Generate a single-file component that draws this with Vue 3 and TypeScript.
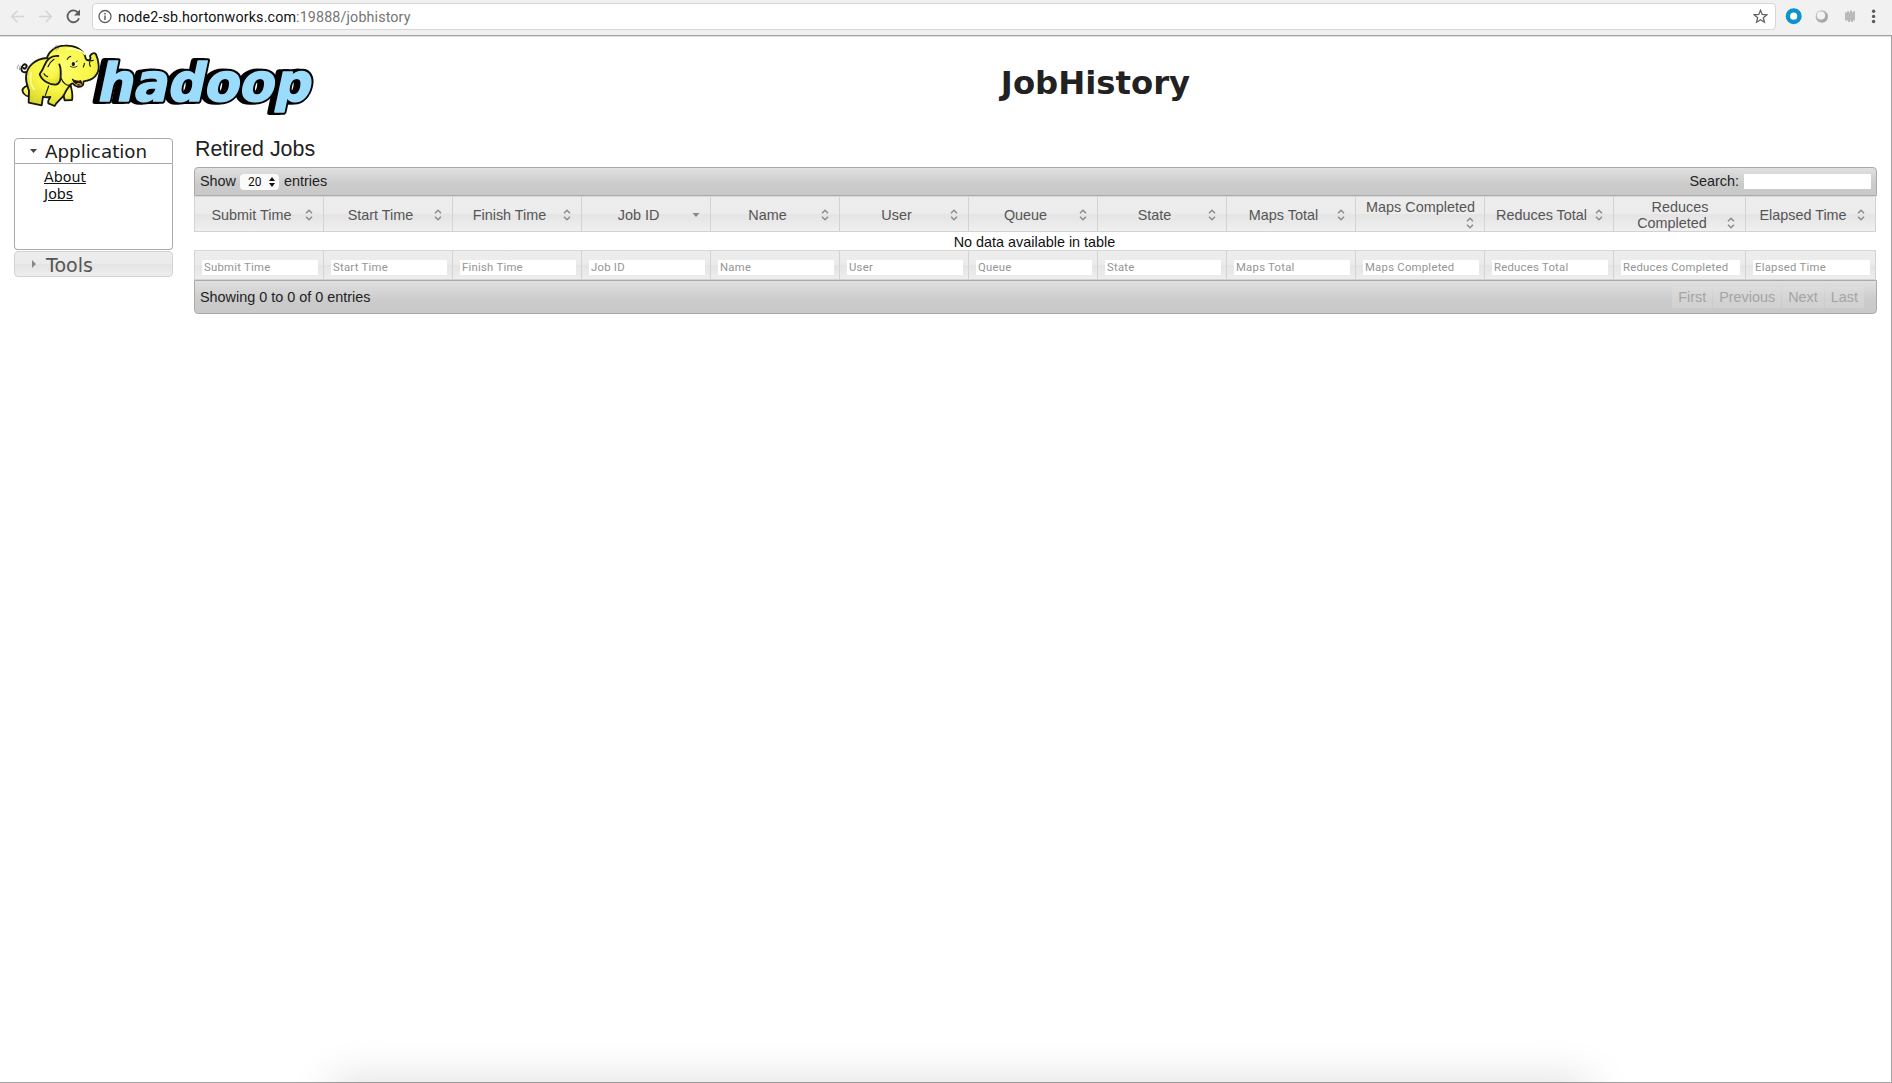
<script setup lang="ts">
interface Column {
  label: string
  sort: 'both' | 'desc'
}

const names: string[] = [
  'Submit Time', 'Start Time', 'Finish Time', 'Job ID', 'Name', 'User', 'Queue',
  'State', 'Maps Total', 'Maps Completed', 'Reduces Total', 'Reduces Completed', 'Elapsed Time',
]
const columns: Column[] = names.map((label) => ({ label, sort: label === 'Job ID' ? 'desc' : 'both' }))
const pages: string[] = ['First', 'Previous', 'Next', 'Last']
</script>

<template>
  <div class="window">
    <header class="browser">
      <svg class="nav" width="92" height="34" viewBox="0 0 92 34" fill="none">
        <path d="M24 16.5H12M17.3 10.8l-5.6 5.7 5.6 5.7M39 16.5h12M45.7 10.8l5.6 5.7-5.6 5.7" stroke="#d4d4d4" stroke-width="1.5" />
        <path d="M78 12.600A5.900 5.900 0 1 0 79 18.200" stroke="#5a5a5a" stroke-width="1.8" />
        <path d="M80 9.600v6h-6z" fill="#5a5a5a" />
      </svg>
      <div class="address">
        <svg width="15" height="15" viewBox="0 0 15 15" fill="none">
          <circle cx="7" cy="7.5" r="6" stroke="#5f5f5f" stroke-width="1.3" />
          <path d="M7 6.600v4.400M7 4v1.500" stroke="#5f5f5f" stroke-width="1.5" />
        </svg>
        <div class="url"><span class="host">node2-sb.hortonworks.com</span>:19888/jobhistory</div>
        <svg class="star" width="15" height="15" viewBox="0 0 15 15" fill="none">
          <path d="M7.5 1.3l1.7 4.2 4.6.3-3.5 2.9 1.1 4.5-3.9-2.5-3.9 2.5 1.1-4.5L1.2 5.8l4.6-.3z" stroke="#5f6368" stroke-width="1.3" />
        </svg>
      </div>
      <svg class="tools" width="116" height="34" viewBox="0 0 116 34" fill="none">
        <defs>
          <linearGradient id="ball" x1="0" y1="0" x2="1" y2="1">
            <stop offset="0" stop-color="#c8c8c8" /><stop offset="1" stop-color="#9b9b9b" />
          </linearGradient>
        </defs>
        <circle cx="17.7" cy="16.200" r="5.8" stroke="#0c92cc" stroke-width="4.4" fill="#fff" />
        <circle cx="45.800" cy="16.500" r="6.2" fill="url(#ball)" />
        <circle cx="45" cy="15.500" r="4.1" fill="#f3f3f3" />
        <path d="M69 12.500h2v-1.200h2v1.200h1V10.600h2v1.900h1v-1.200h2v1.200v8h-2v1.500h-2v-1.500h-1v1.500h-2v-1.500h-3z" fill="#b9b9b9" />
        <g fill="#5a5a5a"><circle cx="97.6" cy="11.3" r="1.7" /><circle cx="97.6" cy="16.4" r="1.7" /><circle cx="97.6" cy="21.5" r="1.7" /></g>
      </svg>
    </header>

    <main class="page">
      <div class="banner">
        <svg class="logo" width="320" height="85" viewBox="0 0 960 255">
          <defs>
            <radialGradient id="skin" cx=".5" cy=".35" r=".7">
              <stop offset="0" stop-color="#ffff6e" /><stop offset=".6" stop-color="#f6f545" /><stop offset="1" stop-color="#d8d62c" />
            </radialGradient>
          </defs>
          <g class="word">
            <text class="shade" x="-14" y="0" textLength="640" lengthAdjust="spacingAndGlyphs" transform="translate(258 195) skewX(-12)">hadoop</text>
            <text class="edge" x="0" y="0" textLength="640" lengthAdjust="spacingAndGlyphs" transform="translate(258 195) skewX(-12)">hadoop</text>
            <text class="face" x="0" y="0" textLength="640" lengthAdjust="spacingAndGlyphs" transform="translate(258 195) skewX(-12)">hadoop</text>
          </g>
          <g fill="url(#skin)" stroke="#17170a" stroke-width="5.5" stroke-linejoin="round" stroke-linecap="round">
            <path d="M50 108C36 112 31 101 36 92M39 88c7-7 14 0 9 7-3 4-6 4-7 1" fill="none" stroke-width="6" />
            <path d="M156 160l8 33 22-1c4-16-2-32-4-44z" />
            <path d="M58 150c-12-2-18 6-21 12 1 9 9 18 21 20z" />
            <path d="M112 66C76 68 50 90 48 122c-1 18 5 30 9 42l-1 36 39 8 4-26c8 3 15 2 22 1-6 8-7 15-6 19l19 8c6-14 24-22 31-39 3-9 10-15 14-23 4-4 6-6 9-6 8 12 24 14 31 5l2-11c30-3 48-22 45-50-1-14-5-24-8-31-5-6-13-4-18 5 3 7 1 11-3 13-4 1-8-2-10-6-4-24-30-40-63-38-28 1-46 16-52 33z" />
            <path d="M187 130c8 5 18 7 26 4l2 11c-7 6-20 4-28-15z" fill="#17170a" stroke-width="3" />
            <path d="M199 146c5-5 10-4 14 0" stroke="#ef7465" stroke-width="4" fill="none" />
            <path d="M145 60c-23-2-36 12-43 31-5 15-12 19-13 24 6 19 30 32 49 31 9-2 13-12 14-21 0-19 2-28-4-40" />
            <path d="M132 70c-8 5-14 13-18 22M102 113c2 5 5 8 11 9M172 70c2-6 5-8 10-9M232 71c6 4 11 5 18 2M239 78c-2 5 0 9 2 13M223 82c0 5-1 8-3 11M106 178l10-28M154 128c6 14 15 20 25 20" fill="none" stroke-width="3.5" />
            <path d="M64 110c-5 18-1 38 8 50M170 40c23-4 45 2 54 15" fill="none" stroke="#ffffa6" stroke-width="5" />
            <ellipse cx="192" cy="83" rx="8" ry="6" fill="#fff" stroke="none" />
            <ellipse cx="190" cy="84" rx="5" ry="6" fill="#17170a" stroke="none" />
            <path d="M181 91c6 4 14 4 20 0M198 78l4-3" fill="none" stroke-width="2.500" />
            <path d="M131 37c2-5 5-7 10-8M138 43c2-3 4-4 7-5M22 97c-1-5 0-7 4-10M29 102c-2-5-1-9 2-12" fill="none" stroke="#999" stroke-width="3" />
          </g>
        </svg>
        <h1>JobHistory</h1>
      </div>

      <div class="columns">
        <nav class="side">
          <h3 class="active"><svg width="8" height="5"><path d="M0 0h7L3.5 4z" fill="#454545" /></svg><span>Application</span></h3>
          <div class="links">
            <a>About</a>
            <a>Jobs</a>
          </div>
          <h3 class="closed"><svg width="8" height="8"><path d="M2 0v8L6 4z" fill="#888" /></svg><span class="big">Tools</span></h3>
        </nav>

        <section class="content">
          <h2>Retired Jobs</h2>
          <div class="bar top">
            <span class="show">Show</span>
            <span class="select">20<svg width="6" height="10"><path d="M0 4L3 0l3 4zM0 6h6L3 10z" fill="#111" /></svg></span>
            <span>entries</span>
            <span class="search">Search:</span>
            <span class="field"></span>
          </div>
          <div class="row head">
            <div v-for="c in columns" :key="c.label" class="cell">
              <div class="label">
                {{ c.label }}<svg class="sort" width="16" height="16" viewBox="0 0 16 16">
                  <path v-if="c.sort === 'both'" d="M5 6.200L8 3.200l3 3M5 9.800l3 3 3-3" fill="none" stroke="#8c8c8c" stroke-width="1.500" />
                  <path v-else d="M4.500 6h7L8 10z" fill="#888" />
                </svg>
              </div>
            </div>
          </div>
          <div class="empty">No data available in table</div>
          <div class="row filter">
            <div v-for="c in columns" :key="c.label" class="cell"><span>{{ c.label }}</span></div>
          </div>
          <div class="bar bottom">
            <span>Showing 0 to 0 of 0 entries</span>
            <div class="pager"><span v-for="p in pages" :key="p">{{ p }}</span></div>
          </div>
        </section>
      </div>
    </main>
    <div class="dock"></div>
  </div>
</template>

<style>
body { margin: 0; background: #fff; }
</style>

<style scoped>
* { box-sizing: border-box; }
.window { position: relative; width: 1892px; height: 1083px; overflow: hidden; display: flex; flex-direction: column; background: #fff; color: #222; font: 14.4px/16px "Liberation Sans", Arial, sans-serif; }
.browser { height: 36px; flex: none; display: flex; background: #f1f1f1; border-bottom: 1px solid #a2a2a2; box-shadow: 0 1px 0 #dedede; }
.nav, .tools { flex: none; display: block; }
.address { flex: 1; height: 27px; margin-top: 3px; display: flex; align-items: center; padding: 0 7px 0 5px; background: #fff; border: 1px solid #d6d6d6; border-radius: 4px; }
.url { flex: 1; margin-left: 5px; font: 14.3px/20px Roboto, sans-serif; letter-spacing: .13px; color: #767676; white-space: nowrap; }
.host { color: #111; }

.page { flex: 1; border-right: 1px solid #a2a2a2; border-bottom: 1px solid #a2a2a2; }
.banner { height: 102px; display: flex; }
.logo { flex: none; margin-left: 10px; display: block; overflow: visible; }
.word text { font: bold 158px "DejaVu Sans", sans-serif; stroke-linejoin: round; }
.word .shade { fill: #000; stroke: #000; stroke-width: 18px; }
.word .edge { fill: #000; stroke: #000; stroke-width: 17px; }
.word .face { fill: #9bdcfd; stroke: #9bdcfd; stroke-width: 5px; }
h1 { flex: 1; margin: 0; padding: 28px 30px 0 0; text-align: center; font: bold 32.3px/38px "DejaVu Sans", Verdana, sans-serif; color: #222; }
.columns { display: flex; align-items: flex-start; }
.side { width: 159px; margin-left: 14px; font-family: "DejaVu Sans", Verdana, sans-serif; }
h3 { margin: 0; display: flex; align-items: center; height: 26px; padding-left: 15px; border: 1px solid #aaa; font-weight: normal; font-size: 18.3px; line-height: 24px; color: #212121; }
h3 svg { margin-right: 7px; }
h3 span { padding-top: 2px; line-height: 22px; }
h3 .big { font-size: 19px; padding-left: 1px; }
.active { border-radius: 4px 4px 0 0; background: #fff; }
.links { height: 86px; padding: 5px 0 0 29px; display: flex; flex-direction: column; align-items: flex-start; border: 1px solid #aaa; border-top: 0; border-radius: 0 0 4px 4px; font-size: 14.2px; line-height: 17px; }
.links a { text-decoration: underline; color: #111; }
.closed { margin-top: 1px; border-color: #d3d3d3; border-radius: 4px; color: #555; background: linear-gradient(#ededed 0, #ebebeb 48%, #e4e4e4 52%, #eee 100%); }

.content { width: 1683px; margin-left: 21px; }
h2 { margin: 0; height: 29px; padding-left: 1px; font: 21.4px/22px "Liberation Sans", Arial, sans-serif; color: #222; }
.bar { display: flex; align-items: center; border: 1px solid #aaa; background: linear-gradient(#e0e0e0, #cbcbcb 60%, #c9c9c9); }
.top { height: 29px; border-radius: 4px 4px 0 0; padding: 0 5px 1px; }
.select { display: flex; align-items: center; width: 39px; height: 16px; margin: 2px 5px 0 4px; padding: 0 4px 0 8px; justify-content: space-between; border-radius: 4px; background: #fafafa; color: #111; font: 12px/16px Roboto, sans-serif; }
.search { margin-left: auto; }
.field { width: 127px; height: 15px; margin: 1px 0 0 5px; background: #fff; }
.row { display: grid; grid-template-columns: repeat(11, 129px) 132px 131px; width: 1682px; }
.cell { border-left: 1px solid #d3d3d3; border-top: 1px solid #d8d8d8; border-bottom: 1px solid #d3d3d3; }
.cell:last-child { border-right: 1px solid #d3d3d3; }
.head .cell { height: 36px; padding: 0 6px 0 7px; display: flex; align-items: center; color: #555; background: linear-gradient(#ededed 0, #ececec 48%, #e4e4e4 52%, #f0f0f0 100%); }
.label { width: 100%; margin-top: 1px; text-align: center; }
.sort { float: right; display: block; }
.empty { height: 18px; padding-right: 2px; text-align: center; line-height: 20px; color: #111; }
.filter .cell { height: 30px; padding: 9px 5px 0 7px; background: linear-gradient(#ededed 0, #ebebeb 48%, #e4e4e4 52%, #eee 100%); }
.filter span { display: block; height: 15px; padding-left: 2px; background: #fff; color: #949494; font: 11.3px/16px Roboto, sans-serif; letter-spacing: .26px; white-space: nowrap; }
.bottom { height: 34px; padding: 0 12px 0 5px; justify-content: space-between; border-radius: 0 0 4px 4px; }
.pager { display: flex; }
.pager span { height: 21px; padding: 0 6px; margin-left: 1px; line-height: 21px; color: #a4a4a4; background: rgba(225, 225, 225, .35); border-radius: 2px; }
.dock { position: absolute; left: 332px; top: 1083px; width: 1258px; height: 40px; box-shadow: 0 -2px 45px rgba(0, 0, 0, .14); }
</style>
